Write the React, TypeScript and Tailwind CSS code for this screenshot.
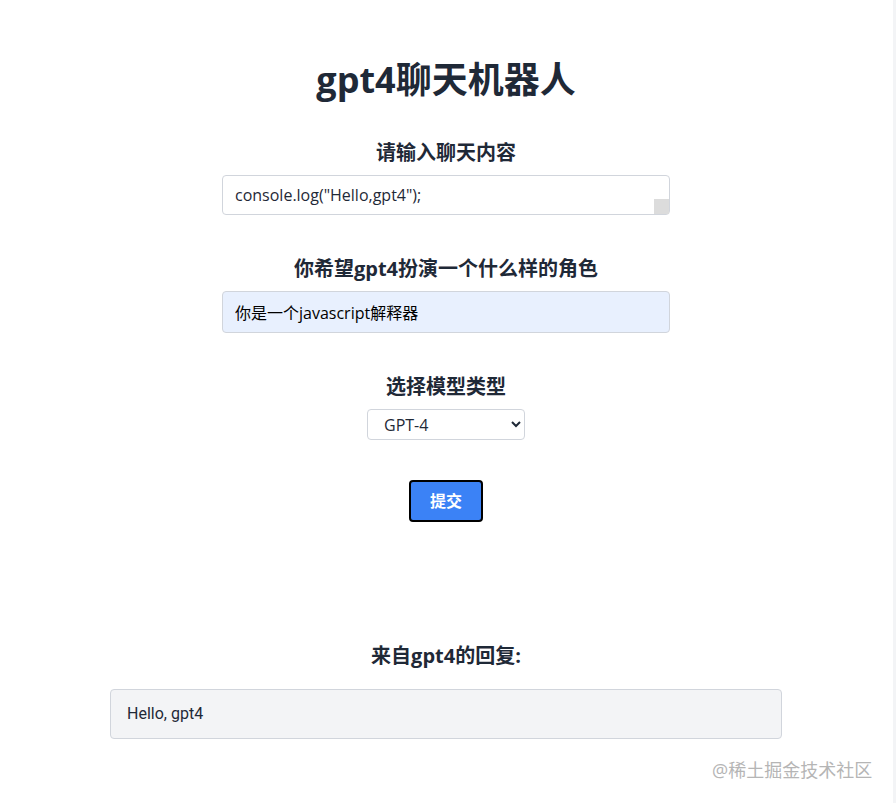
import React, { useState } from 'react';

const latin = "font-['Open_Sans','Noto_Sans_CJK_SC',sans-serif]";

export default function App() {
  const [message, setMessage] = useState('console.log("Hello,gpt4");\n');
  const [role, setRole] = useState('你是一个javascript解释器');
  const [model, setModel] = useState('gpt-4');
  const reply = 'Hello, gpt4';

  return (
    <div className={`relative min-h-[803px] w-[896px] bg-white text-[#1f2937] ${latin}`}>
      <div className="flex w-[892px] flex-col items-center pt-[56px]">
        <h1 className="text-[36px] font-bold leading-[48px]">gpt4聊天机器人</h1>

        <label className="mt-[35px] text-[20px] font-bold leading-[28px]">请输入聊天内容</label>
        <textarea
          value={message}
          onChange={(e) => setMessage(e.target.value)}
          rows={1}
          className="mt-2 h-[40px] w-[448px] resize-y overflow-y-scroll rounded border border-gray-300 px-3 py-[7px] text-[16px] leading-[24px] text-[#1f2937] outline-none [&::-webkit-scrollbar]:w-[17px] [&::-webkit-scrollbar]:bg-white [&::-webkit-scrollbar-thumb]:bg-[#e5e5e5] [&::-webkit-resizer]:bg-[#dcdcdc]"
        />

        <label className="mt-[40px] text-[20px] font-bold leading-[28px]">你希望gpt4扮演一个什么样的角色</label>
        <input
          type="text"
          value={role}
          onChange={(e) => setRole(e.target.value)}
          className="mt-2 h-[42px] w-[448px] rounded border border-gray-300 bg-[#e8f0fe] px-3 text-[16px] text-black outline-none"
        />

        <label className="mt-[40px] text-[20px] font-bold leading-[28px]">选择模型类型</label>
        <select
          value={model}
          onChange={(e) => setModel(e.target.value)}
          className="mt-2 h-[31px] w-[158px] rounded border border-gray-300 bg-white px-3 text-[16px] text-[#1f2937] outline-none"
        >
          <option value="gpt-4">GPT-4</option>
          <option value="gpt-3.5-turbo">GPT-3.5</option>
        </select>

        <button className="mt-[40px] h-[42px] w-[74px] rounded border-2 border-black bg-[#3b82f6] text-[16px] font-bold text-white">
          提交
        </button>

        <h2 className="mt-[120px] text-[20px] font-bold leading-[28px]">来自gpt4的回复:</h2>
        <div className="mt-[19px] flex h-[50px] w-[672px] items-center rounded border border-gray-300 bg-gray-100 px-4 font-['Roboto','Noto_Sans_CJK_SC',sans-serif] text-[16px] text-[#1f2937]">
          {reply}
        </div>
      </div>

      <div className="absolute right-0 top-0 h-full w-[3px] bg-[#f3f4f6]" />
      <span className="absolute left-[712px] top-[757px] text-[18px] text-[#b5b5b5]">@稀土掘金技术社区</span>
    </div>
  );
}
